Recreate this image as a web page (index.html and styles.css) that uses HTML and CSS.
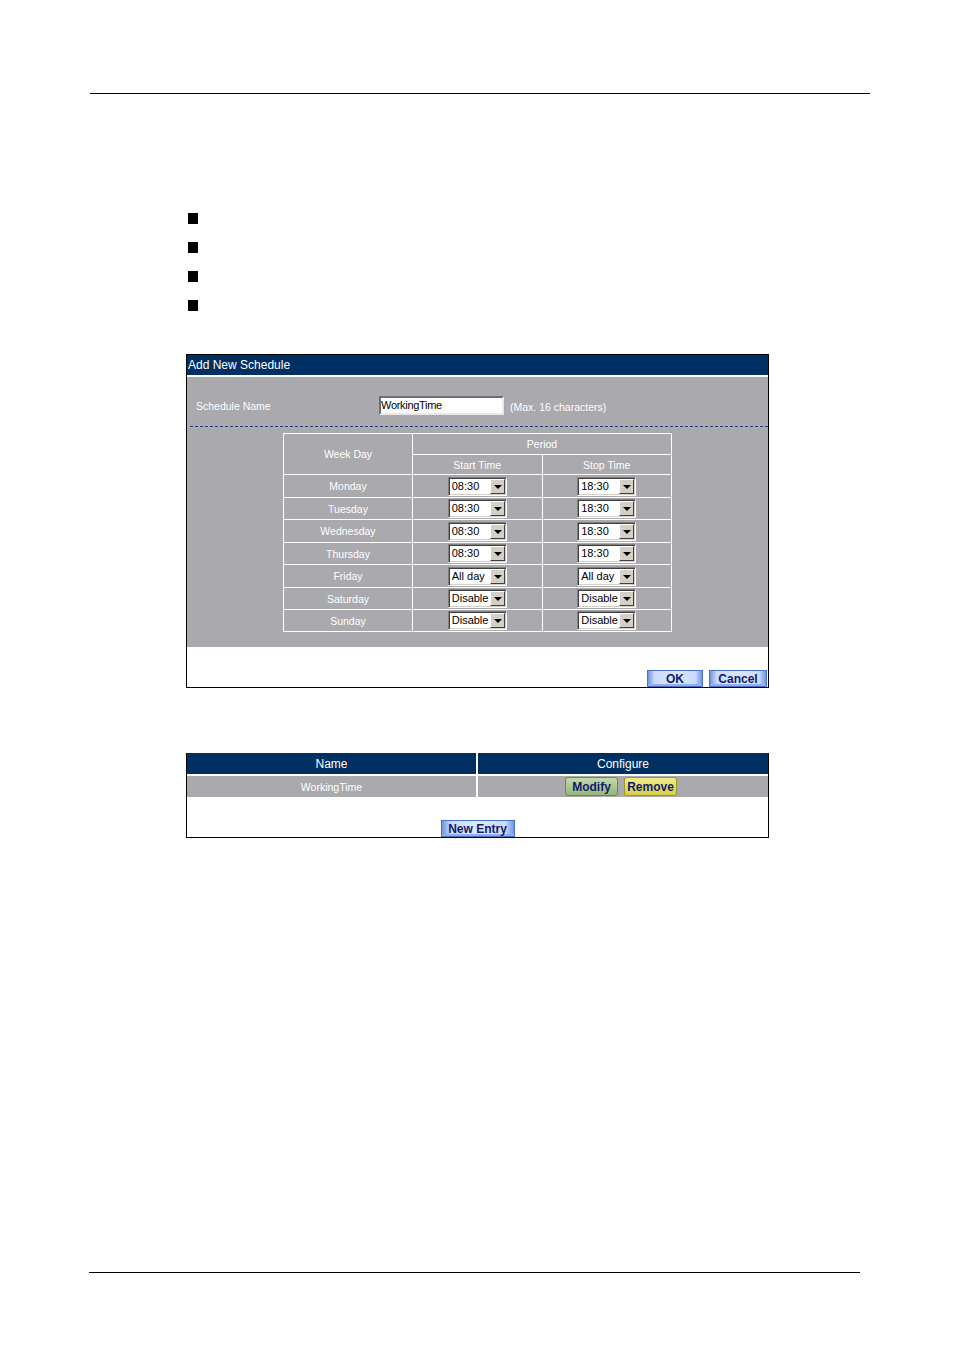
FILE: index.html
```html
<!DOCTYPE html>
<html>
<head>
<meta charset="utf-8">
<link rel="stylesheet" href="styles.css">
</head>
<body>
<div class="page">
  <div class="rule rule-top"></div>
  <ul class="bullets">
    <li></li><li></li><li></li><li></li>
  </ul>

  <div class="panel panel-add">
    <div class="phead">Add New Schedule</div>
    <div class="pbody">
      <div class="namerow">
        <span class="lbl">Schedule Name</span>
        <span class="txt">WorkingTime</span>
        <span class="hint">(Max. 16 characters)</span>
      </div>
      <div class="dash"></div>
      <table class="grid">
        <tr class="h1"><td rowspan="2" class="c1">Week Day</td><td colspan="2">Period</td></tr>
        <tr class="h2"><td class="c2">Start Time</td><td class="c3">Stop Time</td></tr>
        <tr class="tall"><td>Monday</td><td><span class="sel"><span class="v">08:30</span><span class="arr"></span></span></td><td><span class="sel"><span class="v">18:30</span><span class="arr"></span></span></td></tr>
        <tr><td>Tuesday</td><td><span class="sel"><span class="v">08:30</span><span class="arr"></span></span></td><td><span class="sel"><span class="v">18:30</span><span class="arr"></span></span></td></tr>
        <tr class="tall"><td>Wednesday</td><td><span class="sel"><span class="v">08:30</span><span class="arr"></span></span></td><td><span class="sel"><span class="v">18:30</span><span class="arr"></span></span></td></tr>
        <tr><td>Thursday</td><td><span class="sel"><span class="v">08:30</span><span class="arr"></span></span></td><td><span class="sel"><span class="v">18:30</span><span class="arr"></span></span></td></tr>
        <tr class="tall"><td>Friday</td><td><span class="sel"><span class="v">All day</span><span class="arr"></span></span></td><td><span class="sel"><span class="v">All day</span><span class="arr"></span></span></td></tr>
        <tr><td>Saturday</td><td><span class="sel"><span class="v">Disable</span><span class="arr"></span></span></td><td><span class="sel"><span class="v">Disable</span><span class="arr"></span></span></td></tr>
        <tr><td>Sunday</td><td><span class="sel"><span class="v">Disable</span><span class="arr"></span></span></td><td><span class="sel"><span class="v">Disable</span><span class="arr"></span></span></td></tr>
      </table>
    </div>
    <div class="pfoot">
      <span class="btn blue ok">OK</span>
      <span class="btn blue cancel">Cancel</span>
    </div>
  </div>

  <div class="panel panel-list">
    <div class="lhead"><span class="lc1">Name</span><span class="lc2">Configure</span></div>
    <div class="lrow"><span class="lc1">WorkingTime</span><span class="lc2"><span class="btn green">Modify</span><span class="btn yellow">Remove</span></span></div>
    <div class="lfoot"><span class="btn blue newent">New Entry</span></div>
  </div>

  <div class="rule rule-bottom"></div>
</div>
</body>
</html>
```

FILE: styles.css
```css
html, body {
  margin: 0;
  padding: 0;
  background: #fff;
}
.page {
  width: 954px;
  height: 1351px;
  position: relative;
  font-family: "Liberation Sans", Arial, sans-serif;
  overflow: hidden;
}
.rule {
  height: 0;
  border-top: 1px solid #000;
}
.rule-top {
  margin: 93px 0 0 90px;
  width: 780px;
}
.rule-bottom {
  margin: 434px 0 0 89px;
  width: 771px;
}
.bullets {
  list-style: none;
  margin: 119px 0 0 188px;
  padding: 0;
}
.bullets li {
  width: 10px;
  height: 11px;
  background: #000;
  margin-bottom: 18px;
}
.bullets li:last-child { margin-bottom: 0; }

.panel {
  margin-left: 186px;
  width: 581px;
  border: 1px solid #000;
  border-top: none;
}
.panel-add {
  margin-top: 43px;
  border-top: 1px solid #000;
}
.phead {
  height: 20px;
  background: #003063;
  color: #fff;
  font-size: 12px;
  line-height: 20px;
  padding-left: 1px;
  border-bottom: 2px solid #fff;
}
.pbody {
  background: #aaa9ad;
  height: 270px;
  padding-top: 19px;
  box-sizing: border-box;
}
.namerow {
  display: flex;
  align-items: center;
  height: 19px;
  color: #fff;
  font-size: 10.5px;
}
.lbl {
  margin-left: 9px;
  width: 183px;
}
.txt {
  width: 121px;
  height: 15px;
  background: #fff;
  color: #000;
  border: 2px solid;
  border-color: #6e6e6e #e8e8e8 #e8e8e8 #6e6e6e;
  font-size: 11px;
  line-height: 15px;
  letter-spacing: -0.3px;
}
.hint {
  margin-left: 6px;
  margin-top: 3px;
}
.dash {
  margin: 11px 0 0 3px;
  height: 0;
  border-top: 1px dashed #1f3f7a;
}
.grid {
  margin: 6px 0 0 96px;
  border-collapse: collapse;
  width: 389px;
  table-layout: fixed;
}
.grid td {
  border: 1px solid #fff;
  color: #fff;
  font-size: 10.5px;
  text-align: center;
  height: 21px;
  padding: 0;
}
.grid tr.tall td { height: 22px; }
.grid td.c1 { width: 128px; }
.grid .h1 td { height: 20px; }
.grid .h2 td { height: 19px; }
.sel {
  display: inline-flex;
  align-items: center;
  justify-content: space-between;
  width: 59px;
  height: 19px;
  box-sizing: border-box;
  background: #fff;
  border: 1px solid;
  border-color: #808080 #fff #fff #808080;
  box-shadow: inset 1px 1px 0 #404040, inset -1px -1px 0 #d4d0c8;
  vertical-align: middle;
}
.sel .v {
  color: #000;
  font-size: 11px;
  padding-left: 3px;
  line-height: 15px;
}
.arr {
  width: 15px;
  height: 15px;
  box-sizing: border-box;
  margin-right: 1px;
  background: #d4d0c8;
  border: 1px solid;
  border-color: #fff #404040 #404040 #fff;
  position: relative;
}
.arr::after {
  content: "";
  position: absolute;
  left: 3px;
  top: 5px;
  border-left: 4px solid transparent;
  border-right: 4px solid transparent;
  border-top: 4px solid #000;
}
.pfoot {
  height: 40px;
  display: flex;
  justify-content: flex-end;
  align-items: flex-end;
  gap: 6px;
  padding-right: 1px;
  background: #fff;
}
.btn {
  display: inline-flex;
  align-items: center;
  justify-content: center;
  box-sizing: border-box;
  height: 17px;
  font-weight: bold;
  font-size: 12px;
  color: #111a6e;
}
.btn.blue {
  border: 1px solid #4a70c8;
  background: linear-gradient(to right, #6f95e0 0%, #c9dafb 12%, #dce8fd 50%, #c9dafb 88%, #6f95e0 100%);
  box-shadow: inset 0 -2px 0 #8fb0ec;
}
.ok { width: 56px; }
.cancel { width: 58px; }
.btn.green {
  width: 53px;
  height: 19px;
  border: 1px solid #6d8650;
  border-radius: 3px;
  background: linear-gradient(#c3d8ac, #97b67a);
}
.btn.yellow {
  width: 53px;
  height: 19px;
  border: 1px solid #9e9820;
  border-radius: 3px;
  background: linear-gradient(#f1ec8c, #d7cf42);
  margin-left: 6px;
}
.panel-list {
  margin-top: 65px;
}
.lhead {
  display: flex;
  height: 21px;
  background: #003063;
  color: #fff;
  font-size: 12px;
  border-bottom: 2px solid #fff;
}
.lhead span, .lrow > span {
  display: flex;
  align-items: center;
  justify-content: center;
}
.lc1 {
  width: 289px;
  border-right: 2px solid #fff;
}
.lc2 { flex: 1; }
.lrow {
  display: flex;
  height: 21px;
  background: #aaa9ad;
  color: #fff;
  font-size: 10.5px;
}
.lrow .lc2 { padding-right: 4px; }
.lfoot {
  height: 40px;
  display: flex;
  justify-content: center;
  align-items: flex-end;
}
.newent { width: 74px; }
```
